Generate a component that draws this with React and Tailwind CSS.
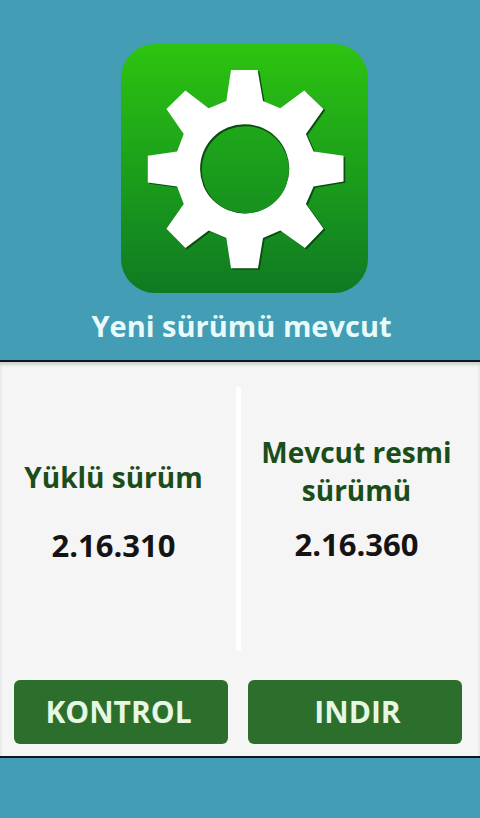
import React from "react";

const gearPoints =
  "392,120 472,120 488,213 540,235 612,182 670,237 617,312 640,365 730,378 730,455 640,470 617,523 670,597 614,655 540,602 488,625 473,716 392,716 378,625 325,602 255,655 198,597 250,523 230,470 142,458 142,378 230,365 250,312 198,237 255,182 325,235 378,213";

function AppIcon() {
  return (
    <div className="ml-[8px] w-[247px] h-[249px] rounded-[34px] bg-gradient-to-b from-[#2dc40f] via-[#1ca01a] to-[#0f7a22]">
      <svg viewBox="62 42 741 748" className="w-full h-full">
        <defs>
          <linearGradient id="hole" x1="0" y1="0" x2="0" y2="1">
            <stop offset="0" stopColor="#1fa818" />
            <stop offset="1" stopColor="#17911f" />
          </linearGradient>
        </defs>
        <polygon points={gearPoints} fill="#0b4d10" transform="translate(5 4)" />
        <polygon points={gearPoints} fill="#ffffff" />
        <circle cx="433" cy="417" r="134" fill="#0b4d10" />
        <circle cx="435" cy="420" r="131" fill="url(#hole)" />
      </svg>
    </div>
  );
}

function ActionButton({ label, className }) {
  return (
    <button className={`flex-1 h-16 pb-[2px] rounded-md bg-[#2c6e2c] text-[#e6f7e3] text-[30px] font-bold ${className}`}>
      {label}
    </button>
  );
}

export default function App() {
  return (
    <div className="w-[480px] h-[818px] bg-[#439db5] flex flex-col font-['Open_Sans',sans-serif]">
      <div className="h-[360px] flex flex-col items-center pt-[44px]">
        <AppIcon />
        <div className="mt-[13px] ml-[3px] text-[29px] leading-[40px] font-bold text-[#e8fbfb]">Yeni sürümü mevcut</div>
      </div>

      <div className="h-[398px] border-y-2 border-[#0d1520] bg-[#f5f5f5] shadow-[inset_0_3px_3px_rgba(0,0,0,0.15)] flex flex-col">
        <div className="flex-1 flex pt-[25px] pb-[29px]">
          {/* left column */}
          <div className="w-[236px] pr-[9px] pb-[87px] flex flex-col items-center justify-end text-center">
            <div className="text-[28px] leading-[37px] font-bold text-[#1b4d1b]">Yüklü sürüm</div>
            <div className="mt-[31px] text-[31px] leading-[37px] font-bold text-[#141414]">2.16.310</div>
          </div>
          <div className="w-[5px] bg-white" />
          {/* right column */}
          <div className="flex-1 pr-[8px] pb-[88px] flex flex-col items-center justify-end text-center">
            <div className="w-[210px] text-[28px] leading-[38px] font-bold text-[#1b4d1b]">Mevcut resmi sürümü</div>
            <div className="mt-[17px] text-[31px] leading-[37px] font-bold text-[#141414]">2.16.360</div>
          </div>
        </div>
        <div className="flex gap-5 pl-[14px] pr-[18px] pb-[12px]">
          <ActionButton label="KONTROL" className="pr-[5px]" />
          <ActionButton label="INDIR" className="pl-[5px]" />
        </div>
      </div>
    </div>
  );
}
